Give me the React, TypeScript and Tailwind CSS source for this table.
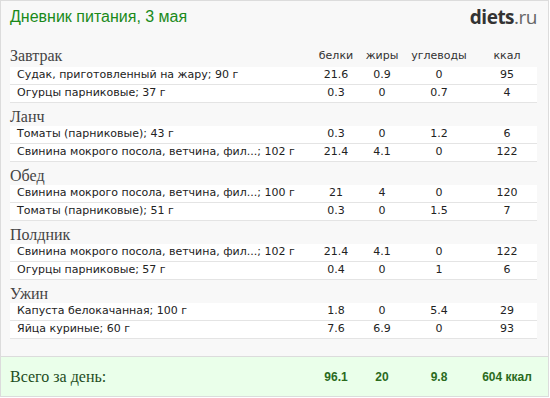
type Item = { name: string; p: string; f: string; c: string; k: string };

const meals: { title: string; items: Item[] }[] = [
  {
    title: 'Завтрак',
    items: [
      { name: 'Судак, приготовленный на жару; 90 г', p: '21.6', f: '0.9', c: '0', k: '95' },
      { name: 'Огурцы парниковые; 37 г', p: '0.3', f: '0', c: '0.7', k: '4' },
    ],
  },
  {
    title: 'Ланч',
    items: [
      { name: 'Томаты (парниковые); 43 г', p: '0.3', f: '0', c: '1.2', k: '6' },
      { name: 'Свинина мокрого посола, ветчина, фил...; 102 г', p: '21.4', f: '4.1', c: '0', k: '122' },
    ],
  },
  {
    title: 'Обед',
    items: [
      { name: 'Свинина мокрого посола, ветчина, фил...; 100 г', p: '21', f: '4', c: '0', k: '120' },
      { name: 'Томаты (парниковые); 51 г', p: '0.3', f: '0', c: '1.5', k: '7' },
    ],
  },
  {
    title: 'Полдник',
    items: [
      { name: 'Свинина мокрого посола, ветчина, фил...; 102 г', p: '21.4', f: '4.1', c: '0', k: '122' },
      { name: 'Огурцы парниковые; 57 г', p: '0.4', f: '0', c: '1', k: '6' },
    ],
  },
  {
    title: 'Ужин',
    items: [
      { name: 'Капуста белокачанная; 100 г', p: '1.8', f: '0', c: '5.4', k: '29' },
      { name: 'Яйца куриные; 60 г', p: '7.6', f: '6.9', c: '0', k: '93' },
    ],
  },
];

const cols = 'grid grid-cols-[1fr_54px_38px_76px_60px] items-center';
const total = "text-center font-['Liberation_Sans',sans-serif] text-[12px] font-bold text-[#2b6b1d]";

export default function App() {
  return (
    <div className="w-[550px] h-[398px] bg-white">
      <div className="flex h-[397px] w-[549px] flex-col border border-[#dcdcdc] bg-[#f8f8f8]">
        <div className="flex h-[41px] items-start justify-between pl-[9px] pr-[11px] pt-[6px]">
          <span className="font-['Liberation_Sans',sans-serif] text-[16px] leading-5 text-[#1a8a1a]">
            Дневник питания, 3 мая
          </span>
          <span className="font-['Open_Sans',sans-serif] text-[19px] leading-5 tracking-[-0.5px]">
            <span className="font-bold text-[#333]">diets</span>
            <span className="text-[#666]">.ru</span>
          </span>
        </div>

        <div className="pl-[9px] pr-[11px] font-['DejaVu_Sans',sans-serif] text-[11px] text-[#222]">
          {meals.map((meal, i) => (
            <div key={meal.title}>
              <div className={`${cols} ${i === 0 ? 'h-[25px]' : 'h-[23px]'} pt-[2px]`}>
                <span className="font-['Liberation_Serif',serif] text-[16px] text-[#444]">{meal.title}</span>
                {i === 0 ? (
                  <>
                    <span className="text-center text-[#333]">белки</span>
                    <span className="text-center text-[#333]">жиры</span>
                    <span className="text-center text-[#333]">углеводы</span>
                    <span className="text-center text-[#333]">ккал</span>
                  </>
                ) : null}
              </div>
              {meal.items.map((it, j) => (
                <div key={j} className={`${cols} h-[18px] border-b border-[#e4e4e4] bg-white`}>
                  <span className="pl-[7px] whitespace-nowrap">{it.name}</span>
                  <span className="text-center">{it.p}</span>
                  <span className="text-center">{it.f}</span>
                  <span className="text-center">{it.c}</span>
                  <span className="text-center">{it.k}</span>
                </div>
              ))}
            </div>
          ))}
        </div>

        <div className="mt-auto h-[40px] border-t border-[#dcdcdc] bg-[#eaffea] pl-[9px] pr-[11px]">
          <div className={`${cols} h-full`}>
            <span className="font-['Liberation_Serif',serif] text-[16px] text-[#1d4d1d]">Всего за день:</span>
            <span className={total}>96.1</span>
            <span className={total}>20</span>
            <span className={total}>9.8</span>
            <span className={total}>604 ккал</span>
          </div>
        </div>
      </div>
    </div>
  );
}
